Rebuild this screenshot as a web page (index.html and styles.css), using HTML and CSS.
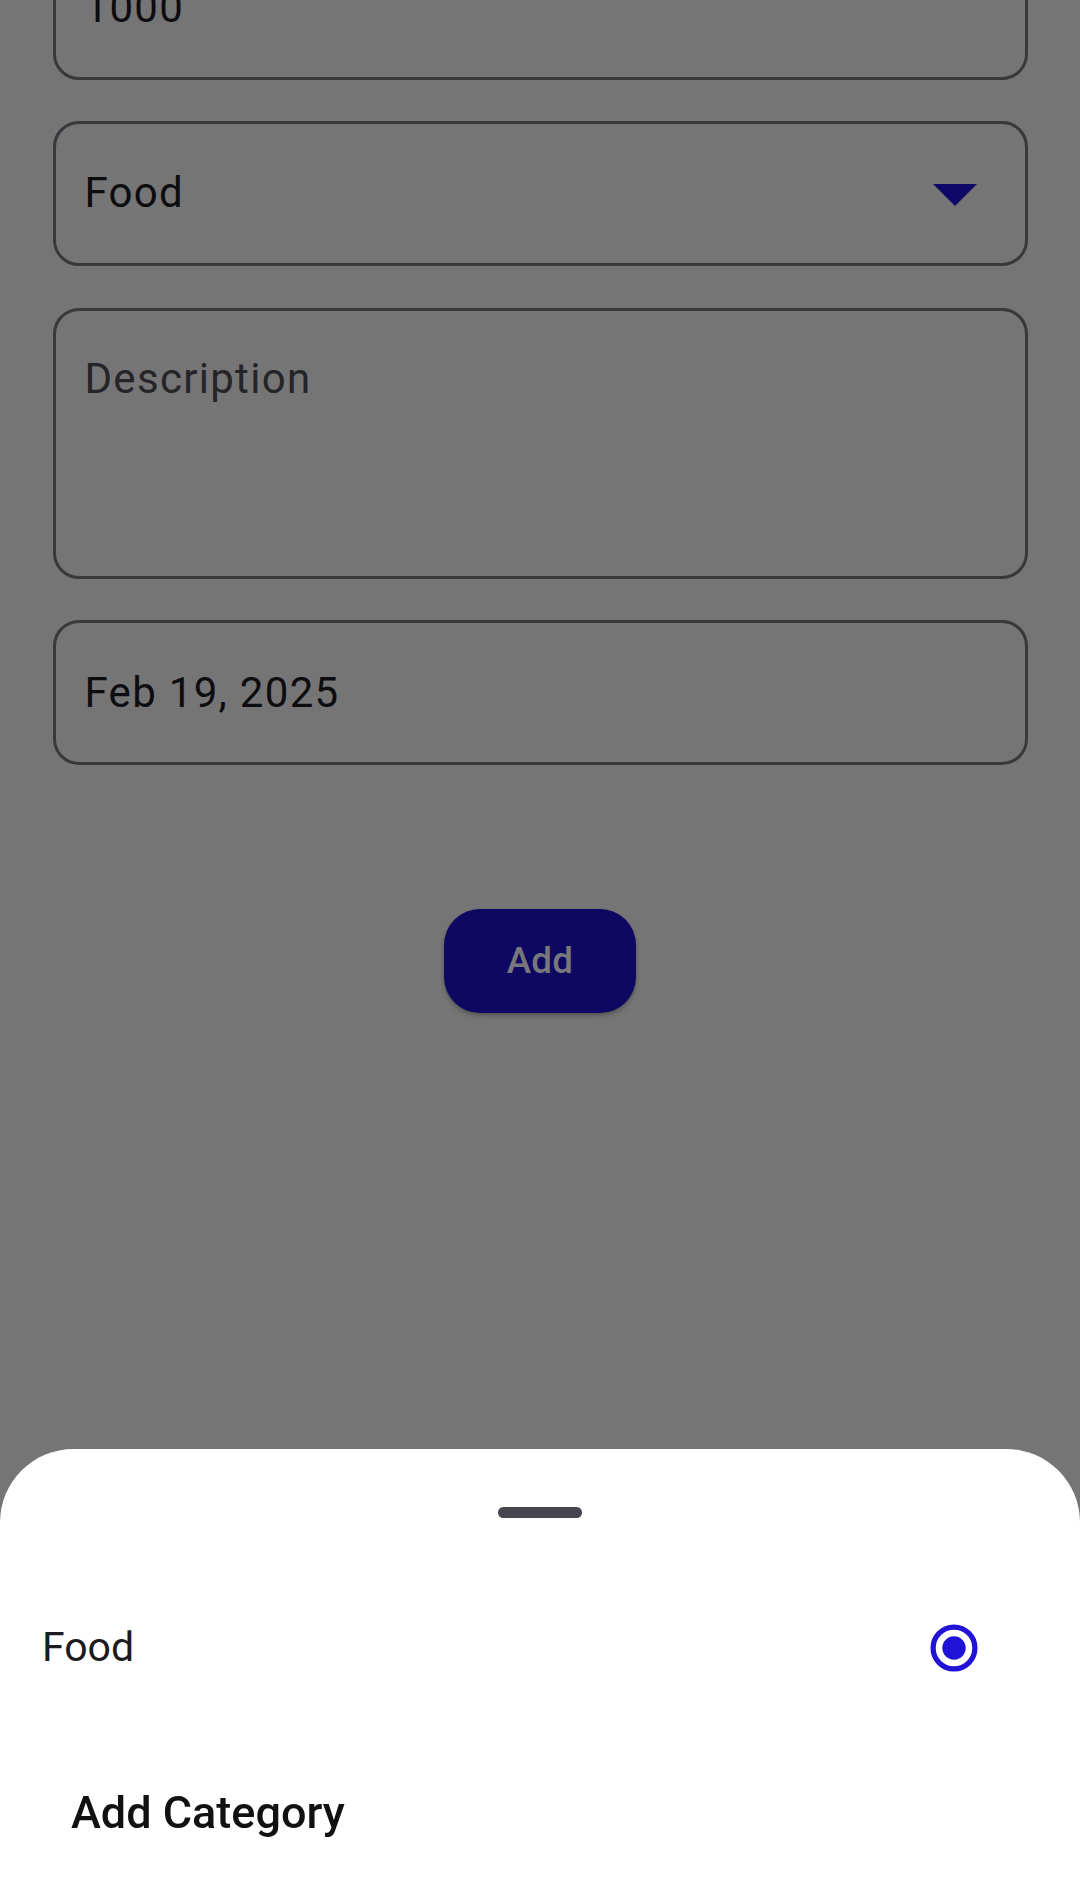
FILE: index.html
```html
<!DOCTYPE html>
<html lang="en">
<head>
<meta charset="utf-8">
<title>Add expense</title>
<link rel="stylesheet" href="styles.css">
</head>
<body>
<main class="form">
  <div class="field"><span class="value">1000</span></div>
  <div class="field field-select">
    <span class="value">Food</span>
    <svg class="caret" width="44" height="22" viewBox="0 0 44 22"><polygon points="0,0 44,0 22,22" fill="#0f0866"/></svg>
  </div>
  <div class="field field-multi"><span class="hint">Description</span></div>
  <div class="field"><span class="value">Feb 19, 2025</span></div>
  <div class="actions"><button class="btn-add" type="button">Add</button></div>
</main>

<section class="sheet">
  <div class="handle"></div>
  <div class="option">
    <span class="option-label">Food</span>
    <svg class="radio" width="48" height="48" viewBox="0 0 48 48">
      <circle cx="24" cy="24" r="20.9" fill="none" stroke="#2013d6" stroke-width="5.25"/>
      <circle cx="24" cy="24" r="11.7" fill="#2013d6"/>
    </svg>
  </div>
  <div class="add-category">Add Category</div>
</section>
</body>
</html>
```

FILE: styles.css
```css
html, body {
  margin: 0;
  padding: 0;
}

body {
  width: 1080px;
  height: 1892px;
  overflow: hidden;
  background: #757575;
  font-family: Roboto, "Noto Sans", "Liberation Sans", sans-serif;
}

.form {
  display: flex;
  flex-direction: column;
  gap: 41.3px;
  padding: 0 52.5px;
  margin-top: -65px;
}

.field {
  box-sizing: border-box;
  height: 145px;
  border: 3px solid #3a383d;
  border-radius: 26px;
  padding: 0 28px 0 29px;
  display: flex;
  align-items: center;
  font-size: 42px;
  line-height: 63px;
  letter-spacing: 1.3px;
}

.value {
  color: #0d0c0f;
}

.hint {
  color: #252428;
}

.field-select {
  padding-right: 48px;
}

.field-select .value {
  margin-top: -2px;
}

.caret {
  margin-left: auto;
  margin-top: 3px;
  display: block;
}

.field-multi {
  height: 271px;
  align-items: flex-start;
  padding-top: 36px;
}

.actions {
  margin-top: 102.7px;
  display: flex;
  justify-content: center;
}

.btn-add {
  height: 104px;
  padding: 0 63px;
  border: none;
  border-radius: 36px;
  background: #0e0863;
  color: #78777c;
  font-family: Roboto, "Noto Sans", sans-serif;
  font-size: 36.75px;
  font-weight: 500;
  letter-spacing: 0.3px;
  box-shadow: 0 3px 5px rgba(0, 0, 0, 0.22), 0 1px 2px rgba(0, 0, 0, 0.15);
}

.sheet {
  position: fixed;
  left: 0;
  right: 0;
  bottom: 0;
  height: 443px;
  background: #ffffff;
  border-radius: 73.5px 73.5px 0 0;
  display: flex;
  flex-direction: column;
}

.handle {
  width: 84px;
  height: 10.5px;
  border-radius: 5.25px;
  background: #49454f;
  margin: 58px auto 0;
}

.option {
  margin-top: 56.5px;
  height: 147px;
  display: flex;
  align-items: center;
  justify-content: space-between;
  padding: 0 102px 0 42px;
}

.option-label {
  font-size: 41px;
  line-height: 63px;
  color: #1d1b20;
}

.radio {
  display: block;
}

.add-category {
  margin-top: 60px;
  padding-left: 71px;
  font-size: 45px;
  font-weight: 500;
  line-height: 63px;
  color: #111111;
}
```
